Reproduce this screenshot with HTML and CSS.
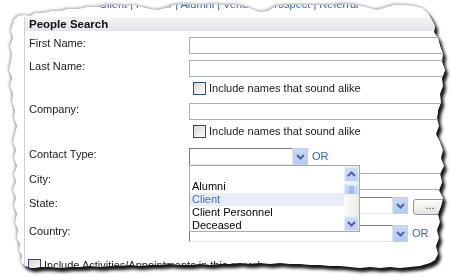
FILE: index.html
```html
<!DOCTYPE html>
<html lang="en">
<head>
  <meta charset="UTF-8">
  <title>People Search</title>
  <link rel="stylesheet" href="styles.css">
</head>
<body>
  <div class="torn">
    <div class="sheet">
      <div class="tabs">Client | Partner | Alumni | Vendor | Prospect | Referral</div>

      <div class="panel">
        <div class="panel-title">People Search</div>

        <div class="row">
          <span class="lbl">First Name:</span>
          <span class="text"></span>
        </div>
        <div class="row">
          <span class="lbl">Last Name:</span>
          <span class="text"></span>
        </div>
        <div class="row check-row mt5">
          <span class="lbl"></span>
          <span class="check"></span>
          <span class="check-text">Include names that sound alike</span>
        </div>
        <div class="row mt8">
          <span class="lbl">Company:</span>
          <span class="text"></span>
        </div>
        <div class="row check-row mt5">
          <span class="lbl"></span>
          <span class="check"></span>
          <span class="check-text">Include names that sound alike</span>
        </div>

        <div class="row mt10">
          <span class="lbl">Contact Type:</span>
          <div class="combo">
            <span class="combo-box short"></span>
            <span class="combo-btn">
              <svg width="15" height="17" viewBox="0 0 15 17"><polyline points="4,7 7.5,10.5 11,7" fill="none" stroke="#4a6494" stroke-width="2"/></svg>
            </span>
            <span class="or">OR</span>

            <div class="listbox">
              <ul class="options">
                <li>Alumni</li>
                <li class="active">Client</li>
                <li>Client Personnel</li>
                <li>Deceased</li>
              </ul>
              <div class="scroll">
                <span class="sb-btn">
                  <svg width="15" height="15" viewBox="0 0 15 15"><polyline points="4,9 7.5,5.5 11,9" fill="none" stroke="#4a6494" stroke-width="2"/></svg>
                </span>
                <span class="sb-thumb">
                  <svg width="15" height="11" viewBox="0 0 15 11"><path d="M5 3h5M5 5h5M5 7h5M5 9h5" stroke="#8aa2d6" stroke-width="1"/></svg>
                </span>
                <span class="sb-track"></span>
                <span class="sb-btn">
                  <svg width="15" height="15" viewBox="0 0 15 15"><polyline points="4,6 7.5,9.5 11,6" fill="none" stroke="#4a6494" stroke-width="2"/></svg>
                </span>
              </div>
            </div>
          </div>
        </div>

        <div class="row mt8">
          <span class="lbl">City:</span>
          <span class="text"></span>
        </div>
        <div class="row mt7">
          <span class="lbl">State:</span>
          <div class="combo">
            <span class="combo-box long"></span>
            <span class="combo-btn">
              <svg width="15" height="17" viewBox="0 0 15 17"><polyline points="4,7 7.5,10.5 11,7" fill="none" stroke="#4a6494" stroke-width="2"/></svg>
            </span>
            <span class="dots-btn">...</span>
          </div>
        </div>
        <div class="row mt11">
          <span class="lbl">Country:</span>
          <div class="combo">
            <span class="combo-box long"></span>
            <span class="combo-btn">
              <svg width="15" height="17" viewBox="0 0 15 17"><polyline points="4,7 7.5,10.5 11,7" fill="none" stroke="#4a6494" stroke-width="2"/></svg>
            </span>
            <span class="or">OR</span>
          </div>
        </div>

        <div class="row check-row bottom">
          <span class="check"></span>
          <span class="check-text">Include Activities/Appointments in this search</span>
        </div>
      </div>
    </div>
  </div>
</body>
</html>
```

FILE: styles.css
```css
body {
  margin: 0;
  background: #fff;
  font-family: "Liberation Sans", Arial, sans-serif;
  font-size: 11px;
  color: #1b1b1b;
}

/* torn paper edge: shadow on the wrapper, jagged clip on the sheet */
.torn {
  width: 452px;
  height: 278px;
  filter: drop-shadow(-1px -1px 1.5px rgba(0, 0, 0, 0.35)) drop-shadow(3px 4px 1.5px rgba(0, 0, 0, 0.9));
}
.sheet {
  width: 452px;
  height: 278px;
  overflow: hidden;
  background: #fff;
  clip-path: polygon(
    14px 20px, 18px 16px, 24px 15px, 30px 16px, 36px 13px, 44px 13px, 52px 11px, 60px 11px,
    68px 9px, 78px 9px, 88px 7px, 98px 7px, 108px 5px, 118px 5px, 126px 6px, 134px 5px,
    142px 7px, 150px 9px, 158px 10px, 166px 8px, 174px 5px, 184px 4px, 194px 5px, 204px 5px,
    214px 4px, 224px 5px, 234px 5px, 244px 6px, 252px 9px, 260px 12px, 268px 11px, 276px 6px,
    286px 5px, 296px 5px, 308px 5px, 320px 5px, 332px 5px, 344px 4px, 356px 5px, 366px 7px,
    376px 10px, 384px 8px, 394px 5px, 404px 5px, 414px 6px, 422px 8px, 428px 13px,
    432px 20px, 435px 26px, 434px 32px, 438px 38px, 440px 46px, 443px 54px, 442px 62px,
    445px 70px, 442px 78px, 443px 86px, 440px 94px, 441px 102px, 438px 110px, 437px 118px,
    439px 126px, 436px 134px, 440px 142px, 443px 150px, 441px 158px, 444px 166px, 440px 174px,
    442px 182px, 439px 190px, 443px 198px, 441px 206px, 438px 214px, 440px 222px, 437px 230px,
    439px 238px, 436px 246px, 438px 254px, 435px 260px, 430px 263px,
    420px 266px, 410px 267px, 400px 268px, 390px 267px, 380px 268px, 370px 267px, 360px 268px,
    350px 267px, 340px 266px, 330px 266px, 320px 265px, 310px 265px, 300px 264px, 290px 264px,
    280px 263px, 270px 264px, 260px 263px, 250px 264px, 240px 263px, 230px 264px, 220px 264px,
    210px 265px, 200px 264px, 190px 265px, 180px 265px, 170px 264px, 160px 265px, 150px 265px,
    140px 266px, 130px 265px, 120px 266px, 110px 266px, 100px 267px, 90px 266px, 80px 267px,
    70px 267px, 60px 268px, 50px 267px, 40px 267px, 32px 268px, 25px 266px, 21px 262px,
    22px 256px, 19px 250px, 20px 244px, 17px 238px, 18px 230px, 15px 222px, 17px 214px,
    14px 206px, 16px 198px, 13px 190px, 16px 182px, 14px 174px, 17px 166px, 14px 158px,
    16px 150px, 13px 142px, 15px 134px, 17px 126px, 14px 118px, 15px 110px, 12px 102px,
    13px 94px, 10px 86px, 12px 78px, 9px 70px, 11px 62px, 12px 54px, 10px 46px, 13px 38px,
    11px 30px, 13px 24px
  );
}

/* link row above the panel, mostly torn away */
.tabs {
  height: 17px;
  padding-left: 99px;
  line-height: 8px;
  color: #2461c8;
  white-space: nowrap;
}

.panel {
  margin-left: 24px;
  width: 440px;
  border-left: 1px solid #cdd2d9;
  padding-bottom: 20px;
}
.panel-title {
  height: 14px;
  line-height: 14px;
  padding-left: 4px;
  font-size: 11.5px;
  font-weight: bold;
  color: #111;
  background: linear-gradient(#f1f3f6, #e3e6eb);
}

.row {
  display: flex;
  align-items: flex-start;
  height: 17px;
  margin-top: 6px;
}
.mt5 { margin-top: 5px; }
.mt7 { margin-top: 7px; }
.mt8 { margin-top: 8px; }
.mt10 { margin-top: 10px; }
.mt11 { margin-top: 11px; }

.lbl {
  flex: none;
  width: 164px;
  padding-left: 4px;
  box-sizing: border-box;
  line-height: 13px;
}

.text {
  flex: none;
  width: 270px;
  height: 15px;
  border: 1px solid #a7afb7;
  background: #fff;
}

.check-row {
  height: 13px;
  align-items: center;
}
.check {
  flex: none;
  width: 11px;
  height: 11px;
  margin-left: 4px;
  border: 1px solid #2a4f78;
  background: linear-gradient(135deg, #d9d9d3, #fcfcfb);
}
.check-text {
  margin-left: 3px;
  line-height: 13px;
  white-space: nowrap;
}
.bottom {
  margin-top: 17px;
}
.bottom .check {
  margin-left: 3px;
}

.combo {
  position: relative;
  display: flex;
  align-items: flex-start;
}
.combo-box {
  flex: none;
  height: 15px;
  border: 1px solid;
  border-color: #7b7b74 #e6e4da #e6e4da #7b7b74;
  background: #fff;
}
.combo-box.short { width: 102px; }
.combo-box.long { width: 202px; }
.combo-btn {
  flex: none;
  display: block;
  width: 15px;
  height: 17px;
  background: linear-gradient(#cbdafc, #b2c7f6);
  box-shadow: inset 0 0 0 1px #bcd0f8;
}
.combo-btn svg { display: block; }
.or {
  margin-left: 4px;
  line-height: 17px;
  color: #2d62c9;
}
.dots-btn {
  flex: none;
  width: 32px;
  height: 14px;
  margin: 2px 0 0 5px;
  border: 1px solid #8a96a3;
  border-radius: 3px;
  background: linear-gradient(#fdfdfd, #e4e3dc);
  line-height: 10px;
  text-align: center;
  color: #333;
}

/* open dropdown of Contact Type */
.listbox {
  position: absolute;
  left: 0;
  top: 17px;
  z-index: 2;
  display: flex;
  width: 169px;
  height: 65px;
  border: 1px solid #a1a9b3;
  background: #fff;
}
.options {
  flex: 1;
  margin: 0;
  padding: 14px 0 0;
  list-style: none;
  color: #000;
}
.options li {
  height: 13px;
  line-height: 13px;
  padding-left: 2px;
  white-space: nowrap;
}
.options li.active {
  background: #e8eef8;
  color: #3b6cc3;
}
.scroll {
  flex: none;
  display: flex;
  flex-direction: column;
  width: 15px;
  padding-top: 1px;
  background: linear-gradient(90deg, #fbfbf8, #ecebe2);
}
.sb-btn,
.sb-thumb {
  display: block;
  flex: none;
  border-radius: 2px;
  background: linear-gradient(#d2defc, #b8cbf7);
  box-shadow: inset 0 0 0 1px #e6edfd;
}
.sb-btn { height: 15px; }
.sb-thumb { height: 11px; margin-top: 2px; }
.sb-btn svg,
.sb-thumb svg { display: block; }
.sb-track { flex: 1; }
```
